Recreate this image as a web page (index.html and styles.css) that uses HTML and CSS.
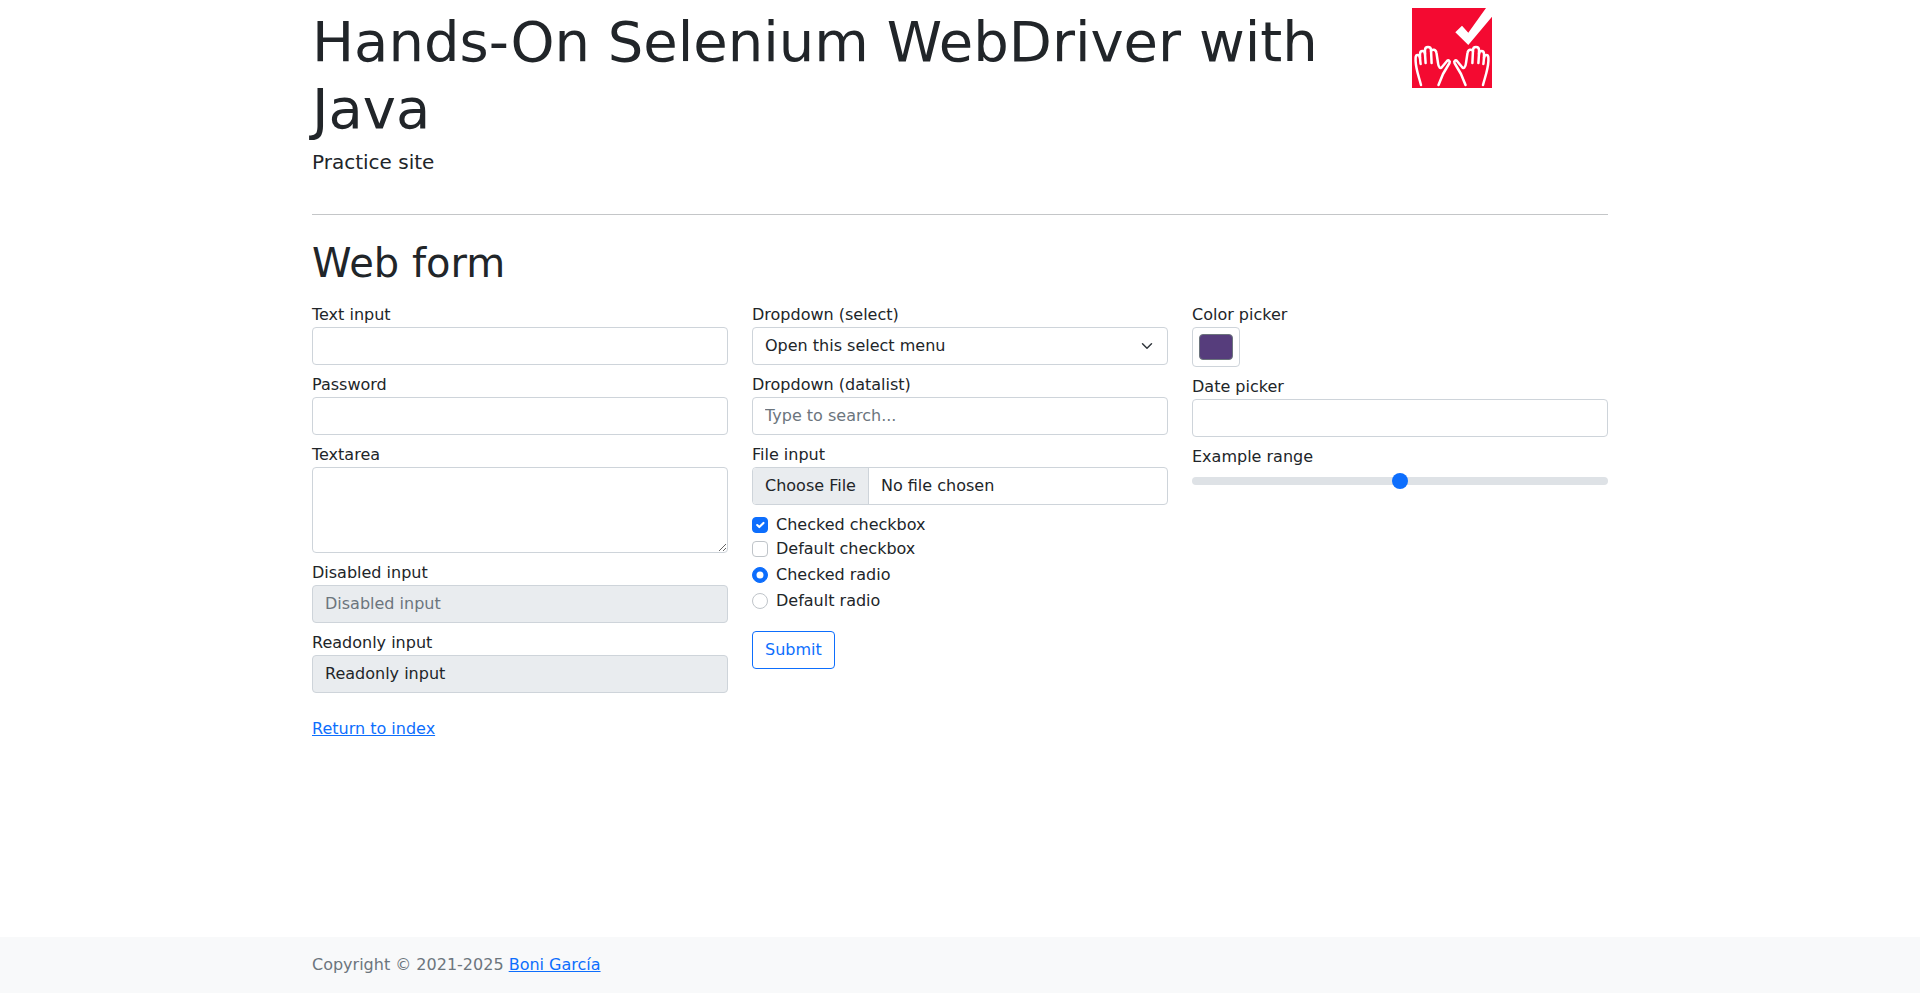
FILE: index.html
```html
<!DOCTYPE html>
<html lang="en">
<head>
    <meta charset="UTF-8">
    <meta name="viewport" content="width=device-width, initial-scale=1.0">
    <title>Hands-On Selenium WebDriver with Java</title>
    <link rel="stylesheet" href="styles.css">
</head>
<body>
    <main class="container">
        <header class="page-header">
            <div>
                <h1 class="site-title">Hands-On Selenium WebDriver with Java</h1>
                <p class="lead">Practice site</p>
            </div>
            <svg class="logo" viewBox="0 0 80 80" width="80" height="80" aria-label="Logo">
                <defs>
                    <g id="hand" fill="none" stroke="#fff" stroke-width="2.500" stroke-linecap="round" stroke-linejoin="round">
                        <path d="M9 77C7 69 4 62 3.600 53V50C3.600 46 7.500 46 8 50L8.600 56"/>
                        <path d="M8 50V46C8 42 13 42 13 46L13.600 55"/>
                        <path d="M13 46V42C13 38 19 38 19 42L19.600 55"/>
                        <path d="M19 43C20 41 24 41 24.500 45L26 55C26.500 60 28.500 61 30 59L35 53C36.500 51.500 38.500 53 37.500 55L31 66L26.500 77"/>
                    </g>
                </defs>
                <rect width="80" height="80" fill="#f40a31"/>
                <polygon fill="#fff" points="43.300,24.300 50,17.700 56.300,24.700 74,0 80,0 80,8.700 56.300,37"/>
                <use href="#hand"/>
                <use href="#hand" transform="translate(80 0) scale(-1 1)"/>
            </svg>
        </header>

        <hr class="divider">

        <h2 class="page-title">Web form</h2>

        <form class="web-form" onsubmit="return false">
            <div>
                <label class="field">Text input
                    <input class="form-control" type="text" name="my-text">
                </label>
                <label class="field">Password
                    <input class="form-control" type="password" name="my-password">
                </label>
                <label class="field">Textarea
                    <textarea class="form-control" name="my-textarea" rows="3"></textarea>
                </label>
                <label class="field">Disabled input
                    <input class="form-control" type="text" name="my-disabled" placeholder="Disabled input" disabled>
                </label>
                <label class="field">Readonly input
                    <input class="form-control" type="text" name="my-readonly" value="Readonly input" readonly>
                </label>
            </div>
            <div>
                <label class="field">Dropdown (select)
                    <select class="form-select" name="my-select">
                        <option selected>Open this select menu</option>
                        <option value="1">One</option>
                        <option value="2">Two</option>
                        <option value="3">Three</option>
                    </select>
                </label>
                <label class="field">Dropdown (datalist)
                    <input class="form-control" name="my-datalist" list="my-options" placeholder="Type to search...">
                    <datalist id="my-options">
                        <option value="San Francisco"></option>
                        <option value="New York"></option>
                        <option value="Seattle"></option>
                    </datalist>
                </label>
                <label class="field">File input
                    <input class="form-control" type="file" name="my-file">
                </label>
                <div class="check-row check-row-tight">
                    <label><input class="check" type="checkbox" checked>Checked checkbox</label>
                </div>
                <div class="check-row">
                    <label><input class="check" type="checkbox">Default checkbox</label>
                </div>
                <div class="check-row">
                    <label><input class="check" type="radio" name="my-radio" checked>Checked radio</label>
                </div>
                <div class="check-row">
                    <label><input class="check" type="radio" name="my-radio">Default radio</label>
                </div>
                <button class="btn-submit" type="submit">Submit</button>
            </div>
            <div>
                <label class="field">Color picker
                    <input class="form-control color-input" type="color" name="my-colors" value="#563d7c">
                </label>
                <label class="field">Date picker
                    <input class="form-control" type="text" name="my-date">
                </label>
                <label class="field">Example range
                    <input class="form-range" type="range" name="my-range" min="0" max="10" step="1" value="5">
                </label>
            </div>
        </form>

        <p class="back-link"><a href="#">Return to index</a></p>
    </main>

    <footer class="footer">
        <div class="container">
            <span class="copyright">Copyright © 2021-2025 <a href="#">Boni García</a></span>
        </div>
    </footer>
</body>
</html>
```

FILE: styles.css
```css
* {
    box-sizing: border-box;
}
body {
    margin: 0;
    min-height: 100vh;
    display: flex;
    flex-direction: column;
    font-family: "DejaVu Sans", sans-serif;
    font-size: 16px;
    line-height: 1.5;
    color: #212529;
    background-color: #fff;
}
a {
    color: #0d6efd;
}
.container {
    width: 1296px;
    margin: 0 auto;
}
.page-header {
    display: grid;
    grid-template-columns: 1076px 1fr;
    gap: 24px;
    padding-top: 8px;
}
.site-title {
    margin: 0 0 5px;
    font-size: 56px;
    font-weight: 400;
    line-height: 1.2;
}
.lead {
    margin: 0;
    font-size: 20px;
}
.logo {
    display: block;
}
.divider {
    margin: 37px 0 0;
    border: 0;
    border-top: 1px solid #c4c6c8;
}
.page-title {
    margin: 24px 0 16px;
    font-size: 40px;
    font-weight: 400;
    line-height: 1.2;
}
.web-form {
    display: grid;
    grid-template-columns: repeat(3, 416px);
    gap: 24px;
}
.field {
    display: block;
    margin-bottom: 8px;
}
.form-control, .form-select {
    display: block;
    width: 100%;
    padding: 6px 12px;
    font-family: inherit;
    font-size: 16px;
    line-height: 1.5;
    color: #212529;
    background-color: #fff;
    border: 1px solid #ced4da;
    border-radius: 4px;
}
.form-control::placeholder {
    color: #6c757d;
    opacity: 1;
}
.form-control:disabled, .form-control[readonly] {
    background-color: #e9ecef;
}
.form-control::file-selector-button {
    margin: -6px 12px -6px -12px;
    padding: 6px 12px;
    height: 36px;
    font: inherit;
    color: #212529;
    background-color: #e9ecef;
    border: 0;
    border-right: 1px solid #ced4da;
    border-radius: 0;
}
.form-select {
    padding-right: 36px;
    appearance: none;
    background-image: url("data:image/svg+xml,%3csvg xmlns='http://www.w3.org/2000/svg' viewBox='0 0 16 16'%3e%3cpath fill='none' stroke='%23343a40' stroke-linecap='round' stroke-linejoin='round' stroke-width='2' d='M2 5l6 6 6-6'/%3e%3c/svg%3e");
    background-repeat: no-repeat;
    background-position: right 12px center;
    background-size: 16px 12px;
}
.color-input {
    width: 48px;
    height: 40px;
    padding: 6px;
}
.color-input::-webkit-color-swatch-wrapper {
    padding: 0;
}
.color-input::-webkit-color-swatch {
    border: 1px solid #6c757d;
    border-radius: 4px;
}
.form-range {
    display: block;
    width: 100%;
    height: 24px;
    margin: 0;
    padding: 0;
    appearance: none;
    background: transparent;
}
.form-range::-webkit-slider-runnable-track {
    height: 8px;
    background-color: #dee2e6;
    border-radius: 16px;
}
.form-range::-webkit-slider-thumb {
    width: 16px;
    height: 16px;
    margin-top: -4px;
    appearance: none;
    background-color: #0d6efd;
    border-radius: 50%;
}
.check-row {
    min-height: 24px;
    margin-bottom: 2px;
}
.check-row-tight {
    margin-bottom: 0;
}
.check {
    width: 16px;
    height: 16px;
    margin: 4px 8px 0 0;
    vertical-align: top;
    appearance: none;
    background-color: #fff;
    background-repeat: no-repeat;
    background-position: center;
    background-size: contain;
    border: 1px solid #bfc4c9;
}
.check[type="checkbox"] {
    border-radius: 4px;
}
.check[type="radio"] {
    border-radius: 50%;
}
.check:checked {
    background-color: #0d6efd;
    border-color: #0d6efd;
}
.check[type="checkbox"]:checked {
    background-image: url("data:image/svg+xml,%3csvg xmlns='http://www.w3.org/2000/svg' viewBox='0 0 20 20'%3e%3cpath fill='none' stroke='%23fff' stroke-linecap='round' stroke-linejoin='round' stroke-width='3' d='M6 10l3 3l6-6'/%3e%3c/svg%3e");
}
.check[type="radio"]:checked {
    background-image: url("data:image/svg+xml,%3csvg xmlns='http://www.w3.org/2000/svg' viewBox='-4 -4 8 8'%3e%3ccircle r='2' fill='%23fff'/%3e%3c/svg%3e");
}
.btn-submit {
    display: block;
    margin-top: 18px;
    padding: 6px 12px;
    font-family: inherit;
    font-size: 16px;
    line-height: 1.5;
    color: #0d6efd;
    background-color: transparent;
    border: 1px solid #0d6efd;
    border-radius: 4px;
}
.back-link {
    margin: 16px 0 0;
}
.footer {
    margin-top: auto;
    padding: 16px 0;
    background-color: #f8f9fa;
}
.copyright {
    color: #6c757d;
}
```
